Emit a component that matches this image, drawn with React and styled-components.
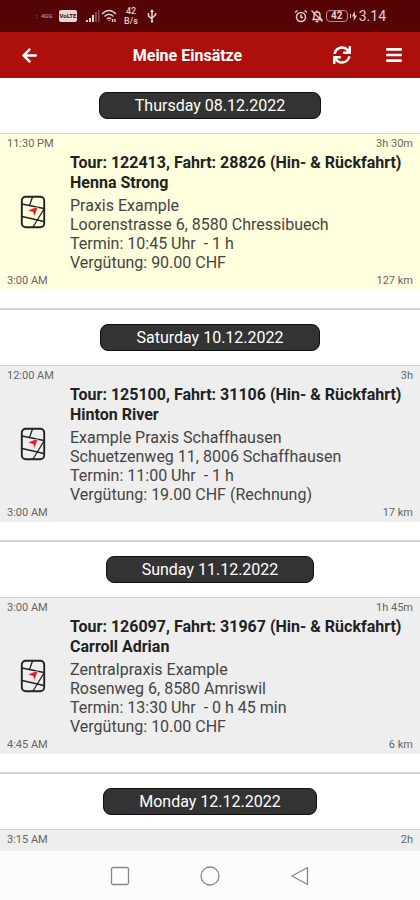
import styled, { createGlobalStyle } from 'styled-components';
import { FaArrowLeft, FaSync, FaBars } from 'react-icons/fa';

const GlobalStyle = createGlobalStyle`
  * { box-sizing: border-box; }
  body { margin: 0; background: #fff; }
  button { border: 0; background: none; padding: 0; font: inherit; color: inherit; cursor: pointer; }
`

const Container = styled.div`
  height: 100vh;
  display: flex;
  flex-direction: column;
  font-family: Roboto, "Liberation Sans", sans-serif;
  color: #444;
`

const StatusBar = styled.div`
  flex: none;
  height: 32px;
  padding: 0 34px 0 36px;
  display: flex;
  justify-content: space-between;
  align-items: center;
  background: #540404;
  color: #e6cfcf;
`

const StatusGroup = styled.div`
  display: flex;
  align-items: center;
  gap: ${(props) => props.$gap}px;
`

const Carrier = styled.span`
  width: 23px;
  font-size: 6px;
  line-height: 8px;
  font-weight: 700;
  color: #b98080;
  white-space: pre;
`

const Volte = styled.span`
  width: 18px;
  margin-right: 9px;
  border-radius: 2px;
  background: #ead8d8;
  color: #540404;
  font-size: 6px;
  line-height: 12px;
  font-weight: 700;
  text-align: center;
`

const Speed = styled.span`
  width: 16px;
  margin: 0 8px 0 5px;
  display: flex;
  flex-direction: column;
  align-items: center;
  font-size: 9px;
  line-height: 10px;
  font-weight: 500;
`

const Battery = styled.span`
  width: 22px;
  border: 1px solid #b98c8c;
  border-radius: 4px;
  font-size: 10px;
  line-height: 10px;
  font-weight: 700;
  text-align: center;
`

const Clock = styled.span`
  font-size: 14px;
  line-height: 16px;
`

const AppBar = styled.header`
  flex: none;
  height: 46px;
  display: flex;
  align-items: center;
  background: #ad100b;
  color: #fff;

  h1 {
    flex: 1;
    margin: 0;
    padding-top: 2px;
    font-size: 16px;
    line-height: 24px;
    font-weight: 700;
    text-align: center;
  }
`

const BarButton = styled.button`
  width: ${(props) => props.$width}px;
  height: 46px;
  display: flex;
  align-items: center;
  justify-content: center;
`

const DayList = styled.main`
  flex: 1;
  min-height: 0;
  overflow: hidden;
`

const Day = styled.section`
  padding-bottom: 18px;
  border-bottom: 2px solid #d2d2d2;
`

const DayHeader = styled.div`
  padding: 14px 0;
  display: flex;
  justify-content: center;
`

const DateLabel = styled.h2`
  margin: 0;
  padding: 0 35px;
  border: 1px solid #111;
  border-radius: 8px;
  background: #333;
  color: #fff;
  font-size: 16px;
  line-height: 25px;
  font-weight: 400;
`

const Trip = styled.article`
  min-height: 157px;
  padding: 3px 7px 2px;
  border-top: 1px solid #d6d6d6;
  background: ${(props) => (props.$highlight ? '#fffedd' : '#eee')};
`

const TripMeta = styled.div`
  display: flex;
  justify-content: space-between;
  font-size: 11px;
  line-height: 14px;
  color: #666;
`

const TripBody = styled.div`
  padding: 2px 0 0 13px;
  display: flex;
  align-items: center;
  gap: 24px;
`

const MapButton = styled.button`
  flex: none;
  width: 26px;
`

const TripText = styled.div`
  white-space: nowrap;

  h3 {
    margin: 0;
    font-size: 16px;
    line-height: 20px;
    font-weight: 700;
    color: #222;
  }
  p {
    margin: 0;
    font-size: 16px;
    line-height: 19px;
    font-weight: 400;
    white-space: pre;
  }
`

const TripDetails = styled.div`
  padding: 3px 0 2px;
`

const NavBar = styled.nav`
  flex: none;
  height: 49px;
  display: flex;
  align-items: center;
  justify-content: center;
  background: #fcfcfc;
`

const NavButton = styled.button`
  width: 90px;
  height: 48px;
  display: flex;
  align-items: center;
  justify-content: center;
`

const days = [
  {
    date: 'Thursday 08.12.2022', start: '11:30 PM', end: '3:00 AM', duration: '3h 30m', distance: '127 km',
    tour: 'Tour: 122413, Fahrt: 28826 (Hin- & Rückfahrt)', name: 'Henna Strong', highlight: true,
    details: ['Praxis Example', 'Loorenstrasse 6, 8580 Chressibuech', 'Termin: 10:45 Uhr  - 1 h', 'Vergütung: 90.00 CHF'],
  },
  {
    date: 'Saturday 10.12.2022', start: '12:00 AM', end: '3:00 AM', duration: '3h', distance: '17 km',
    tour: 'Tour: 125100, Fahrt: 31106 (Hin- & Rückfahrt)', name: 'Hinton River',
    details: ['Example Praxis Schaffhausen', 'Schuetzenweg 11, 8006 Schaffhausen', 'Termin: 11:00 Uhr  - 1 h', 'Vergütung: 19.00 CHF (Rechnung)'],
  },
  {
    date: 'Sunday 11.12.2022', start: '3:00 AM', end: '4:45 AM', duration: '1h 45m', distance: '6 km',
    tour: 'Tour: 126097, Fahrt: 31967 (Hin- & Rückfahrt)', name: 'Carroll Adrian',
    details: ['Zentralpraxis Example', 'Rosenweg 6, 8580 Amriswil', 'Termin: 13:30 Uhr  - 0 h 45 min', 'Vergütung: 10.00 CHF'],
  },
  { date: 'Monday 12.12.2022', start: '3:15 AM', duration: '2h' },
]

function App() {
  return (
    <Container>
      <GlobalStyle />
      <PhoneStatus />
      <AppBar>
        <BarButton $width={58} aria-label="Zurück"><FaArrowLeft size={17} /></BarButton>
        <h1>Meine Einsätze</h1>
        <BarButton $width={50} aria-label="Aktualisieren"><FaSync size={18} /></BarButton>
        <BarButton $width={53} aria-label="Menü"><FaBars size={18} /></BarButton>
      </AppBar>
      <DayList>
        {days.map((day) => <DayItem key={day.date} day={day} />)}
      </DayList>
      <PhoneNav />
    </Container>
  )
}

function DayItem({ day }) {
  return (
    <Day>
      <DayHeader>
        <DateLabel>{day.date}</DateLabel>
      </DayHeader>
      <Trip $highlight={day.highlight}>
        <TripMeta>
          <span>{day.start}</span>
          <span>{day.duration}</span>
        </TripMeta>
        {day.tour && (
          <TripBody>
            <MapButton aria-label="Karte"><MapIcon /></MapButton>
            <TripText>
              <h3>{day.tour}</h3>
              <h3>{day.name}</h3>
              <TripDetails>
                {day.details.map((line) => <p key={line}>{line}</p>)}
              </TripDetails>
            </TripText>
          </TripBody>
        )}
        {day.end && (
          <TripMeta>
            <span>{day.end}</span>
            <span>{day.distance}</span>
          </TripMeta>
        )}
      </Trip>
    </Day>
  )
}

function MapIcon() {
  return (
    <svg width="26" height="34" viewBox="0 0 26 34" fill="none" stroke="#222" strokeWidth="1.3">
      <rect x="1.8" y="1.8" width="22.4" height="30.4" rx="4" strokeWidth="1.9" />
      <path d="M2 9L24 13.500M12.500 2L9.500 10.500M2 21.500L24 26.500M24 14L13 32" />
      <path d="M18 11.500L7.500 15.500L13 17L14.500 21.500Z" fill="#e81818" stroke="#eee" strokeWidth=".5" />
    </svg>
  )
}

function PhoneStatus() {
  return (
    <StatusBar>
      <StatusGroup $gap={0}>
        <Carrier>:  4GG</Carrier>
        <Volte>VoLTE</Volte>
        <svg width="14" height="14" viewBox="0 0 14 14" fill="currentColor">
          <path d="M0 11h2v2H0zM3 9h2v4H3zM6 6h2v7H6z" />
          <path d="M9 3h2v10H9zM12 1h1.5v12H12z" opacity=".35" />
        </svg>
        <svg width="18" height="16" viewBox="0 0 18 16" fill="none" stroke="currentColor" strokeWidth="1.6">
          <path d="M2 6Q9 -1 16 6M4.500 8.500Q9 4 13.500 8.500M7 11Q9 9 11 11" />
          <path d="M9 12v1M12.500 11v3M15 11v3" strokeWidth="1.400" />
        </svg>
        <Speed><span>42</span><span>B/s</span></Speed>
        <svg width="10" height="14" viewBox="0 0 10 14" fill="none" stroke="currentColor" strokeWidth="1.600">
          <path d="M5 1v11M1.500 4v3L5 10M8.500 4v2L5 9" />
          <path d="M5 0l2 3H3zM5 11l1.500 1.500L5 14l-1.500-1.500z" fill="currentColor" stroke="none" />
        </svg>
      </StatusGroup>
      <StatusGroup $gap={2}>
        <svg width="14" height="14" viewBox="0 0 14 14" fill="none" stroke="currentColor" strokeWidth="1.500">
          <circle cx="7" cy="8" r="4.500" />
          <path d="M7 5.500v3h2M1 3.500l2.500-2M13 3.500l-2.500-2" />
        </svg>
        <svg width="14" height="14" viewBox="0 0 14 14" fill="none" stroke="currentColor" strokeWidth="1.400">
          <path d="M3 10.500h8.500L10 8.500V6Q10 3 7 3T4 6v2.500zM7 1.500v1.500M5.500 12.500h3M1.500 1.500l11 11" />
        </svg>
        <Battery>42</Battery>
        <svg width="7" height="10" viewBox="0 0 7 10" fill="currentColor">
          <path d="M0 3h1v4H0zM4.500 0L2 5.500h2L3.500 10 7 4.500H5z" />
        </svg>
        <Clock>3.14</Clock>
      </StatusGroup>
    </StatusBar>
  )
}

function PhoneNav() {
  return (
    <NavBar>
      <NavButton aria-label="Letzte Apps">
        <svg width="20" height="20" viewBox="0 0 20 20" fill="none" stroke="#888" strokeWidth="1.300">
          <rect x="1.500" y="1.500" width="17" height="17" rx="1.500" />
        </svg>
      </NavButton>
      <NavButton aria-label="Startseite">
        <svg width="20" height="20" viewBox="0 0 20 20" fill="none" stroke="#888" strokeWidth="1.300">
          <circle cx="10" cy="10" r="9" />
        </svg>
      </NavButton>
      <NavButton aria-label="Zurück">
        <svg width="20" height="20" viewBox="0 0 20 20" fill="none" stroke="#888" strokeWidth="1.300" strokeLinejoin="round">
          <path d="M17.500 1.500v17L2 10z" />
        </svg>
      </NavButton>
    </NavBar>
  )
}

export default App
